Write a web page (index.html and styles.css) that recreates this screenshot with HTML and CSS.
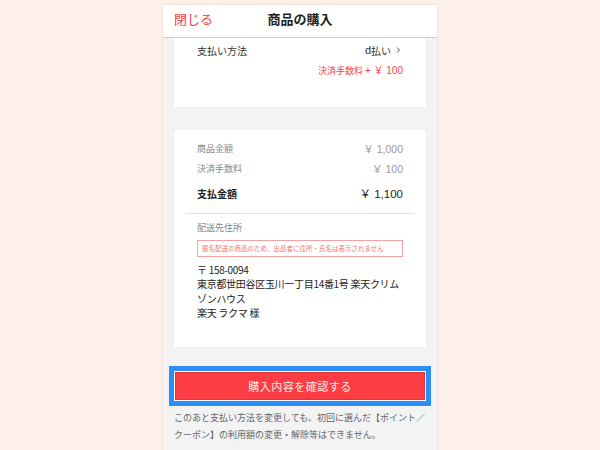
FILE: index.html
```html
<!DOCTYPE html>
<html lang="ja">
<head>
<meta charset="utf-8">
<title>商品の購入</title>
<link rel="stylesheet" href="styles.css">
</head>
<body>
<div class="phone">
  <header class="topbar">
    <span class="close">閉じる</span>
    <h1 class="title">商品の購入</h1>
  </header>
  <main class="content">
    <section class="card card-pay">
      <div class="row pay-row">
        <span class="label-dark">支払い方法</span>
        <span class="pay-value"><span class="lat">d</span>払い
          <svg class="chev" width="5" height="8" viewBox="0 0 5 8"><path d="M1 1.5l2.5 2.5-2.5 2.5" fill="none" stroke="#555" stroke-width="1"/></svg>
        </span>
      </div>
      <div class="fee-note">決済手数料 <span class="lat">+ ￥ 100</span></div>
    </section>

    <section class="card card-sum">
      <div class="inner">
        <div class="row sum-row"><span>商品金額</span><span class="lat">￥ 1,000</span></div>
        <div class="row sum-row"><span>決済手数料</span><span class="lat">￥ 100</span></div>
        <div class="row total-row"><span>支払金額</span><span class="lat">￥ 1,100</span></div>
      </div>
      <hr class="divider">
      <div class="inner">
        <div class="addr-label">配送先住所</div>
        <div class="anon-box">匿名配送の商品のため、出品者に住所・氏名は表示されません</div>
        <div class="addr">
          <div>〒 158-0094</div>
          <div>東京都世田谷区玉川一丁目14番1号 楽天クリムゾンハウス</div>
          <div>楽天 ラクマ 様</div>
        </div>
      </div>
    </section>

    <div class="btn-wrap">
      <button class="confirm">購入内容を確認する</button>
    </div>
    <p class="note">このあと支払い方法を変更しても、初回に選んだ【ポイント／クーポン】の利用額の変更・解除等はできません。</p>
  </main>
</div>
</body>
</html>
```
FILE: styles.css
```css
html, body {
  margin: 0;
  padding: 0;
  background: #fdf0e8;
  height: 100%;
  overflow: hidden;
}
body {
  font-family: "Noto Sans CJK JP", "Noto Sans", sans-serif;
  color: #333;
}
.lat {
  font-family: "Liberation Sans", "Noto Sans CJK JP", sans-serif;
}
.phone {
  width: 274px;
  margin: 5px auto 0;
  background: #f3f3f3;
  height: 460px;
  box-shadow: 0 0 2px rgba(0,0,0,0.12);
}
.topbar {
  height: 32px;
  background: #fff;
  border-bottom: 1px solid #cfcfcf;
  display: flex;
  align-items: center;
  justify-content: center;
  position: relative;
}
.close {
  position: absolute;
  left: 11px;
  top: 4px;
  font-size: 13px;
  color: #f5424a;
}
.title {
  margin: 0;
  font-size: 13px;
  font-weight: bold;
  color: #222;
  line-height: 1;
  margin-top: -5px;
}
.content {
  padding: 0 11px;
}
.card {
  background: #fff;
  box-shadow: 0 0 1px rgba(0,0,0,0.1);
}
.card-pay {
  height: 69px;
  padding: 4px 23px 0;
  box-sizing: border-box;
}
.row {
  display: flex;
  justify-content: space-between;
  align-items: center;
}
.pay-row {
  font-size: 10px;
  height: 16px;
}
.label-dark { color: #333; }
.pay-value {
  display: flex;
  align-items: center;
  gap: 5px;
  color: #333;
  margin-right: 2px;
}
.pay-value .lat { margin-right: -5px; font-size: 11px; }
.chev { display: block; }
.fee-note {
  text-align: right;
  font-size: 9px;
  color: #f5424a;
  margin-top: 4px;
}
.fee-note .lat { font-size: 10px; }
.card-sum {
  margin-top: 23px;
  height: 217px;
  padding: 8px 12px 0;
  box-sizing: border-box;
}
.inner {
  padding: 0 11px;
}
.sum-row {
  font-size: 9px;
  color: #888;
  height: 20px;
}
.sum-row span:last-child { font-size: 10.5px; color: #999; }
.total-row {
  font-size: 10px;
  font-weight: bold;
  color: #222;
  height: 22px;
  margin-top: 4px;
}
.total-row span:last-child { font-weight: normal; font-size: 11.5px; color: #222; }
.divider {
  border: 0;
  border-top: 1px solid #e2e2e2;
  margin: 9px 0 7px;
}
.addr-label {
  font-size: 9px;
  color: #888;
  line-height: 14px;
}
.anon-box {
  margin-top: 5px;
  border: 1px solid #f4a3a3;
  color: #f07878;
  font-size: 6.5px;
  line-height: 15px;
  padding: 0 4px;
  white-space: nowrap;
  overflow: hidden;
}
.addr {
  margin-top: 6px;
  font-size: 10px;
  line-height: 14.3px;
  letter-spacing: -0.3px;
  color: #222;
}
.btn-wrap {
  margin-top: 25px;
  padding: 0 1px;
}
.confirm {
  display: block;
  width: 100%;
  height: 28px;
  background: #fc3e44;
  border: 1px solid #e8323a;
  color: #ffe9ea;
  font-family: inherit;
  font-size: 11px;
  letter-spacing: 0.5px;
  box-shadow: 0 0 0 1px #fff, 0 0 0 6px #2c8ef5;
  padding: 0;
}
.note {
  margin: 9px 0 0;
  font-size: 9px;
  line-height: 17px;
  color: #666;
}
```
